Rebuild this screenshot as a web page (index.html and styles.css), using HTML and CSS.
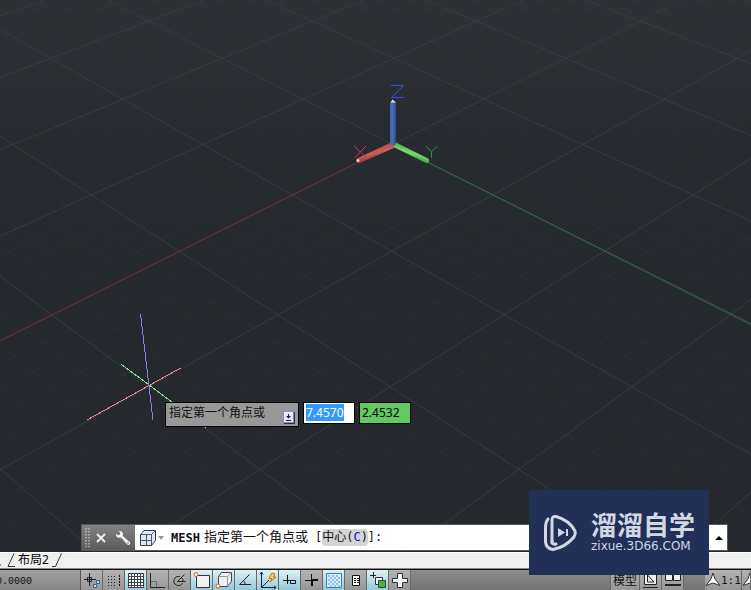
FILE: index.html
```html
<!DOCTYPE html>
<html lang="zh-CN">
<head>
<meta charset="utf-8">
<title>MESH</title>
<link rel="stylesheet" href="styles.css">
</head>
<body>
<main class="viewport">
  <svg class="scene" viewBox="0 0 751 552" preserveAspectRatio="xMinYMin slice" aria-hidden="true">
    <defs>
      <linearGradient id="ax-x" x1="0" y1="0" x2=".45" y2="1"><stop offset=".3" stop-color="#a94143"/><stop offset=".6" stop-color="#d06060"/><stop offset=".85" stop-color="#963337"/></linearGradient>
      <linearGradient id="ax-y" x1="1" y1="0" x2=".55" y2="1"><stop offset=".25" stop-color="#3c9b3c"/><stop offset=".6" stop-color="#74dd6e"/><stop offset=".9" stop-color="#378c38"/></linearGradient>
      <linearGradient id="ax-z"><stop offset="0" stop-color="#3b62a6"/><stop offset=".4" stop-color="#4672b8"/><stop offset="1" stop-color="#2b4b8c"/></linearGradient>
    </defs>
    <g id="minor" class="minor"></g>
    <g id="major" class="major"></g>
    <path class="line-x" d="M393 145 0 341"/>
    <path class="line-y" d="M393 145 751 324"/>
    <path fill="url(#ax-x)" d="M392 142 357 158.500Q354.500 162 359 163.500L395 147.500Z"/>
    <circle cx="358" cy="160.500" r="1.500" fill="#ffc8c8"/>
    <path fill="url(#ax-y)" d="M396 142.500 428 158.500Q431 161.500 427 163.500L393.500 147Z"/>
    <path fill="url(#ax-z)" d="M390 102h6v40l-3 4-3-3Z"/>
    <path d="M390.500 102.500 392.500 99.500 396 102.500Z" fill="#dbe5fa"/>
    <path class="mark-z" d="M391 85.500H403.500L391.500 97.500H404"/>
    <path class="mark-x" d="M354 146 366 157M366 146 354.500 158"/>
    <path class="mark-y" d="M425.500 146 431.500 151.500 437.500 146M431.500 151.500V158"/>
    <g shape-rendering="crispEdges">
      <path stroke="#7fe897" d="M121.500 364.500 172 402"/>
      <path stroke="#f0868a" d="M87 420 180.500 368"/>
      <path stroke="#8181ec" d="M140.500 314 153 420"/>
      <path stroke="#d8dccd" d="M205 427.500h1"/>
    </g>
  </svg>

  <div class="dynamic-input">
    <div class="prompt"><label for="x-value">指定第一个角点或</label>
      <button class="more" type="button" aria-label="选项"><svg width="12" height="13" viewBox="0 0 12 13"><path fill="#e8e8f8" stroke="#8a8ab9" d="M.5.500h10v11H.500z"/><path fill="none" stroke="#292967" d="M11.500 1v11.500H1"/><path d="M5 3h1v2h2L5.500 7.500 3 5h2zM3 9h5v1H3z" fill="#222"/></svg></button>
    </div>
    <input id="x-value" class="field field-x" value="7.4570" autofocus>
    <input class="field field-y" value="2.4532" aria-label="Y">
  </div>

  <div class="command">
    <div class="grip">
      <svg width="6" height="19" viewBox="0 0 6 19"><path stroke="#bdbdbd" stroke-width="1.500" stroke-dasharray="1.500 1.500" d="M1 0v19M4 0v19"/></svg>
      <button type="button" aria-label="关闭"><svg width="12" height="12" viewBox="0 0 12 12"><path stroke="#eee" stroke-width="2" d="M2 2 10 10M10 2 2 10"/></svg></button>
      <button type="button" aria-label="自定义"><svg width="16" height="16" viewBox="0 0 16 16"><path fill="#f2f2f2" d="M5 1 3.500 1 5.300 3 4.800 4.800 3 5.200 1 3.500Q.700 7 3.500 7.800L6 7.500 11.800 14Q13.500 15.800 14.800 14.300T14 11.500L7.800 6 8 3.500Q7.200 1.200 5 1Z"/><circle cx="13" cy="13" r=".8" fill="#666"/></svg></button>
    </div>
    <div class="line">
      <svg width="18" height="18" viewBox="0 0 18 18"><path fill="#dce7f1" stroke="#333f4d" stroke-linejoin="round" d="M1.500 5.500 5 1.500H16.500V11.500L12.500 16.500H1.500Z"/><path fill="none" stroke="#4c5a6a" d="M1.500 5.500H12.500V16.500M12.500 5.500 16.500 1.500M7.500 5.500v11M1.500 11.500h11"/></svg>
      <svg class="drop" width="6" height="4" viewBox="0 0 6 4"><path d="M0 0h6L3 4z" fill="#999"/></svg>
      <b class="cmd">MESH</b><span class="ask">指定第一个角点或</span><span class="opt">[<button type="button">中心(<i>C</i>)</button>]:</span>
    </div>
    <button class="history" type="button" aria-label="历史记录"><svg width="8" height="4" viewBox="0 0 8 4"><path d="M0 4 4 0 8 4z"/></svg></button>
  </div>
</main>

<nav class="tabs">
  <svg width="15" height="16" viewBox="0 0 15 16"><path stroke="#333" fill="none" d="M0 12h1M8 13.500 14 .500M8 13.500h7"/></svg>
  <a href="#layout2">布局2</a>
  <svg width="10" height="16" viewBox="0 0 10 16"><path stroke="#333" fill="none" d="M0 13.500H3.500L9.500.500"/></svg>
</nav>

<footer class="status">
  <div class="coords">0.0000</div>
  <div class="toggles">
    <button type="button" aria-label="捕捉"><svg viewBox="0 0 22 21"><path stroke="#222" fill="none" d="M3 9.500h12M8.500 3v13M6.500 7.500h4v4h-4z"/><path fill="#cde" stroke="#36608c" d="M15.500 10.500h3v3h-3zM12.500 14.500h3v3h-3z"/></svg></button>
    <button type="button" aria-label="点"><svg viewBox="0 0 22 21"><path stroke="#222" stroke-dasharray="1 2" d="M5 6.500h9M5 9.500h9M5 12.500h9M5 15.500h9"/><path stroke="#111" stroke-dasharray="2 1" d="M16.500 5v11"/></svg></button>
    <button class="on" type="button" aria-label="栅格"><svg viewBox="0 0 22 21"><path fill="#fff" stroke="#3a3f44" d="M3.500 3.500h15v14h-15zM6.500 3v15M9.500 3v15M12.500 3v15M15.500 3v15M3 6.500h16M3 9.500h16M3 12.500h16M3 15.500h16"/></svg></button>
    <button type="button" aria-label="正交"><svg viewBox="0 0 22 21"><path stroke="#222" fill="none" d="M3.500 3v14.500H18"/><path stroke="#4d7181" fill="none" d="M4 11.500h5.500V17"/></svg></button>
    <button type="button" aria-label="极轴"><svg viewBox="0 0 22 21"><path stroke="#222" fill="none" d="M11 6.800A4.500 4.500 0 1 0 13.500 13M8.500 11.500h8M8.500 11.500 15.500 4.500M12.500 8q2 1 1.500 3.500"/></svg></button>
    <button class="on" type="button" aria-label="对象捕捉"><svg viewBox="0 0 22 21"><path fill="#eef0f2" stroke="#333" d="M5.500 5.500h13v12h-13z"/><circle cx="5" cy="4.500" r="2" fill="#fff" stroke="#da5725"/></svg></button>
    <button class="on" type="button" aria-label="三维捕捉"><svg viewBox="0 0 22 21"><path fill="#eef0f2" stroke="#444" stroke-linejoin="round" d="M5.500 6.500 8.500 2.500h10v9L14.500 16.500H5.500z"/><path fill="none" stroke="#99a" d="M6 6.500h8.500V16M14.500 6.500l4-4"/><circle cx="5" cy="16" r="2" fill="#fff" stroke="#da5725"/></svg></button>
    <button class="on" type="button" aria-label="对象追踪"><svg viewBox="0 0 22 21"><path stroke="#222" fill="none" d="M14.500 4.500 4.500 14.500H16M8.500 10.500q2 2 1.500 4"/></svg></button>
    <button class="on" type="button" aria-label="动态坐标"><svg viewBox="0 0 22 21"><path stroke="#223" fill="none" d="M4.500 2v15.500H19M3 4.500 4.500 2 6 4.500M17 16l2 1.500-2 1.500M5 17 12 10"/><path fill="#ffd65f" stroke="#c76b19" d="M15 3 12 8.500h3L13 12l6-5h-3l2-3z"/></svg></button>
    <button class="on" type="button" aria-label="动态输入"><svg viewBox="0 0 22 21"><path stroke="#111" fill="none" d="M4 10.500h8M8.500 5v9M11.500 10.500h5v3h-5z"/></svg></button>
    <button type="button" aria-label="线宽"><svg viewBox="0 0 22 21"><path stroke="#111" d="M4 10.500h6M10.500 4v6"/><path stroke="#111" stroke-width="2" d="M10 10h7M11 9v7"/></svg></button>
    <button class="on" type="button" aria-label="透明度"><svg viewBox="0 0 22 21"><path fill="#dceefa" stroke="#347dbd" d="M3.500 3.500h15v14h-15z"/><path stroke="#8fc0e8" stroke-width="2" stroke-dasharray="2 2" d="M5 6h12M7 8h10M5 10h12M7 12h10M5 14h12M7 16h10"/></svg></button>
    <button type="button" aria-label="快捷特性"><svg viewBox="0 0 22 21"><path fill="#fff" stroke="#111" d="M7.500 5.500h7v10h-7z"/><path stroke="#111" stroke-dasharray="2 1" d="M9 8.500h5M9 10.500h5M9 12.500h5"/></svg></button>
    <button class="on" type="button" aria-label="选择循环"><svg viewBox="0 0 22 21"><path stroke="#222" d="M3 5.500h6M6.500 2v6"/><path fill="#eef7ee" stroke="#333" d="M8.500 7.500h7v7h-7z"/><path fill="#5aaa42" stroke="#22511b" d="M11.500 10.500h7v7h-7z"/></svg></button>
    <button type="button" aria-label="注释监视器"><svg viewBox="0 0 22 21"><path fill="#f1f1f1" stroke="#2e3336" d="M8.500 3.500h5v5h5v4h-5v5h-5v-5h-5v-4h5z"/></svg></button>
  </div>
  <div class="spaces">
    <button class="model" type="button">模型</button>
    <button type="button" aria-label="布局"><svg viewBox="0 0 22 21"><path fill="#eee" stroke="#222" d="M4.500 2.500h12v12h-12z"/><path fill="none" stroke="#222" d="M7.500 5v7H14zM3 17.500h15"/></svg></button>
    <button type="button" aria-label="快速查看"><svg viewBox="0 0 22 21"><path fill="#eee" stroke="#222" d="M3.500 4.500h7v6h-7zM11.500 4.500h7v6h-7z"/><path stroke="#222" stroke-width="2" d="M3 15h16"/></svg></button>
    <button class="scale" type="button"><svg viewBox="0 0 16 16"><path fill="#fff" stroke="#333" d="M8 1 10 7 15 13.500 8 11 1 13.500 6 7Z"/></svg>1:1</button>
    <button class="visibility" type="button" aria-label="注释可见性"><svg viewBox="0 0 16 16"><path fill="#fff" stroke="#333" d="M8 1 10 7 15 13.500 8 11 1 13.500 6 7Z"/></svg></button>
  </div>
</footer>

<aside class="brand">
  <svg width="36" height="38" viewBox="0 0 36 38"><g fill="none" stroke="#d3d7e1" stroke-width="3" stroke-linecap="round" stroke-linejoin="round"><path d="M9 29V6Q9 2 13 2.500C22 5 29 11 32 17Q33 20 31 23C26 29 18 34 10 35.500 5 35 3 32 2.500 28V14Q2.500 8 5 5"/><path d="M9 27q0 4 4 3"/></g><path fill="#d3d7e1" d="M15 14v9l7-4.500zM23 15h2v7h-2z"/></svg>
  <div class="brand-text"><strong>溜溜自学</strong><span>zixue.3D66.COM</span></div>
</aside>
<script src="scene.js"></script>
</body>
</html>
```
FILE: styles.css
```css
* { box-sizing: border-box; }

body {
  margin: 0;
  height: 100vh;
  display: flex;
  flex-direction: column;
  position: relative;
  overflow: hidden;
  font-family: "Noto Sans", "Noto Sans CJK SC", sans-serif;
  font-size: 12px;
  color: #111;
}

button {
  margin: 0;
  padding: 0;
  border: 0;
  background: none;
  font: inherit;
  color: inherit;
}

svg { display: block; flex: none; }

.viewport {
  flex: 1;
  min-height: 0;
  position: relative;
  background: linear-gradient(#2e3236, #272b2f 25%, #25282d 50%, #25282d);
}

.scene { position: absolute; width: 100%; height: 100%; fill: none; }
.minor { stroke: #2b2f33; }
.major { stroke: #383c40; }
.line-x { stroke: #78282f; }
.line-y { stroke: #2b7434; }
.mark-x { stroke: #d83645; }
.mark-y { stroke: #28992e; }
.mark-z { stroke: #2458dc; }

.dynamic-input {
  position: absolute;
  left: 165px;
  top: 402px;
  display: flex;
  align-items: flex-start;
  gap: 4px;
}

.prompt {
  display: flex;
  width: 134px;
  height: 25px;
  padding: 0 3px;
  justify-content: space-between;
  border: 1px solid #000;
  background: #989898;
  line-height: 20px;
}

.more { align-self: flex-end; padding-bottom: 2px; }

.field {
  width: 52px;
  height: 22px;
  padding: 0 2px 2px;
  border: 1px solid #000;
  border-radius: 0;
  outline: 0;
  font: inherit;
  background: #fff;
}

.field::selection { background: #3399ff; color: #fff; }
.field-y { background: #62ca62; }

.command {
  position: absolute;
  left: 81px;
  right: 23px;
  bottom: 1px;
  height: 27px;
  display: flex;
  border: 1px solid #55575a;
  background: #fff;
}

.grip {
  width: 53px;
  padding: 0 4px 0 3px;
  display: flex;
  align-items: center;
  gap: 4px;
  background: linear-gradient(#818181, #5c5c5c);
}

.grip button:last-child { margin-left: auto; }

.line {
  flex: 1;
  display: flex;
  align-items: center;
  padding-left: 4px;
  font-family: "DejaVu Sans Mono", "Noto Sans CJK SC", monospace;
  white-space: pre;
}

.drop { margin: 0 7px 0 1px; }
.ask { margin: 0 7px 0 4px; font-size: 13px; line-height: 20px; padding-bottom: 2px; }
.opt { font-size: 12px; }
.opt button { border-radius: 4px; background: #d4d4d4; line-height: 17px; }
.opt i { font-style: normal; color: #00f; }
.history { width: 16px; display: grid; place-items: center; }

.tabs {
  height: 17px;
  display: flex;
  align-items: flex-start;
  border-top: 1px solid #fff;
  border-bottom: 1px solid #888;
  background: #f0f0f0;
}

.tabs a { margin: 0 3px; color: #000; text-decoration: none; line-height: 14px; }

.status {
  height: 21px;
  display: flex;
  border-top: 1px solid #111;
  background: linear-gradient(#8d8d8d, #727272);
}

.coords {
  width: 81px;
  overflow: hidden;
  border-right: 1px solid #555;
  background: linear-gradient(#a0a0a0, #848484);
  font: 10px/24px "Liberation Mono", monospace;
  text-indent: -4px;
}

.toggles, .spaces { display: flex; }
.toggles button, .spaces button { width: 22px; border-right: 1px solid #686868; background: linear-gradient(#b4b4b4, #969696); }
.toggles svg, .spaces svg { width: 22px; height: 21px; fill: none; }
.toggles .on { background: linear-gradient(#dff1f6, #93c9da); }

.spaces { margin-left: auto; }
.spaces .model { width: 30px; border-left: 1px solid #686868; line-height: 19px; }
.spaces .scale { width: 37px; margin-left: 21px; display: flex; align-items: center; border-left: 0; font: 11px "DejaVu Sans Mono", monospace; }
.spaces .scale svg, .spaces .visibility svg { width: 16px; height: 16px; }
.spaces .visibility { width: 9px; overflow: hidden; }

.brand {
  position: absolute;
  right: 42px;
  bottom: 15px;
  width: 180px;
  height: 85px;
  display: flex;
  align-items: center;
  gap: 12px;
  padding-left: 14px;
  background: #223058;
  color: #d3d7e1;
}

.brand-text { padding-bottom: 4px; }
.brand strong { display: block; font-size: 26px; line-height: 30px; }
.brand span { display: block; font: 12px/12px "DejaVu Sans", sans-serif; }
```
FILE: scene.js
```js
// Ground grid in perspective: (i, j) are grid units along the X and Y axes.
function project(i, j) {
  const scale = 1 / (0.005263 - 0.00028 * (i + j));
  const y = 144.5 + (scale - 190) / 0.212;
  const x = 393 - 0.0115 * (y - 144.5) + (j - i) / 2 * scale;
  return x.toFixed(1) + " " + y.toFixed(1);
}

let major = "";
let minor = "";
for (let n = -45; n <= 45; n++) {
  const k = n / 5;
  const d = "M" + project(k, -9) + "L" + project(k, 9) +
            "M" + project(-9, k) + "L" + project(9, k);
  if (n % 5 === 0) major += d; else minor += d;
}
document.getElementById("major").innerHTML = '<path d="' + major + '"/>';
document.getElementById("minor").innerHTML = '<path d="' + minor + '"/>';
document.getElementById("x-value").select();
```
